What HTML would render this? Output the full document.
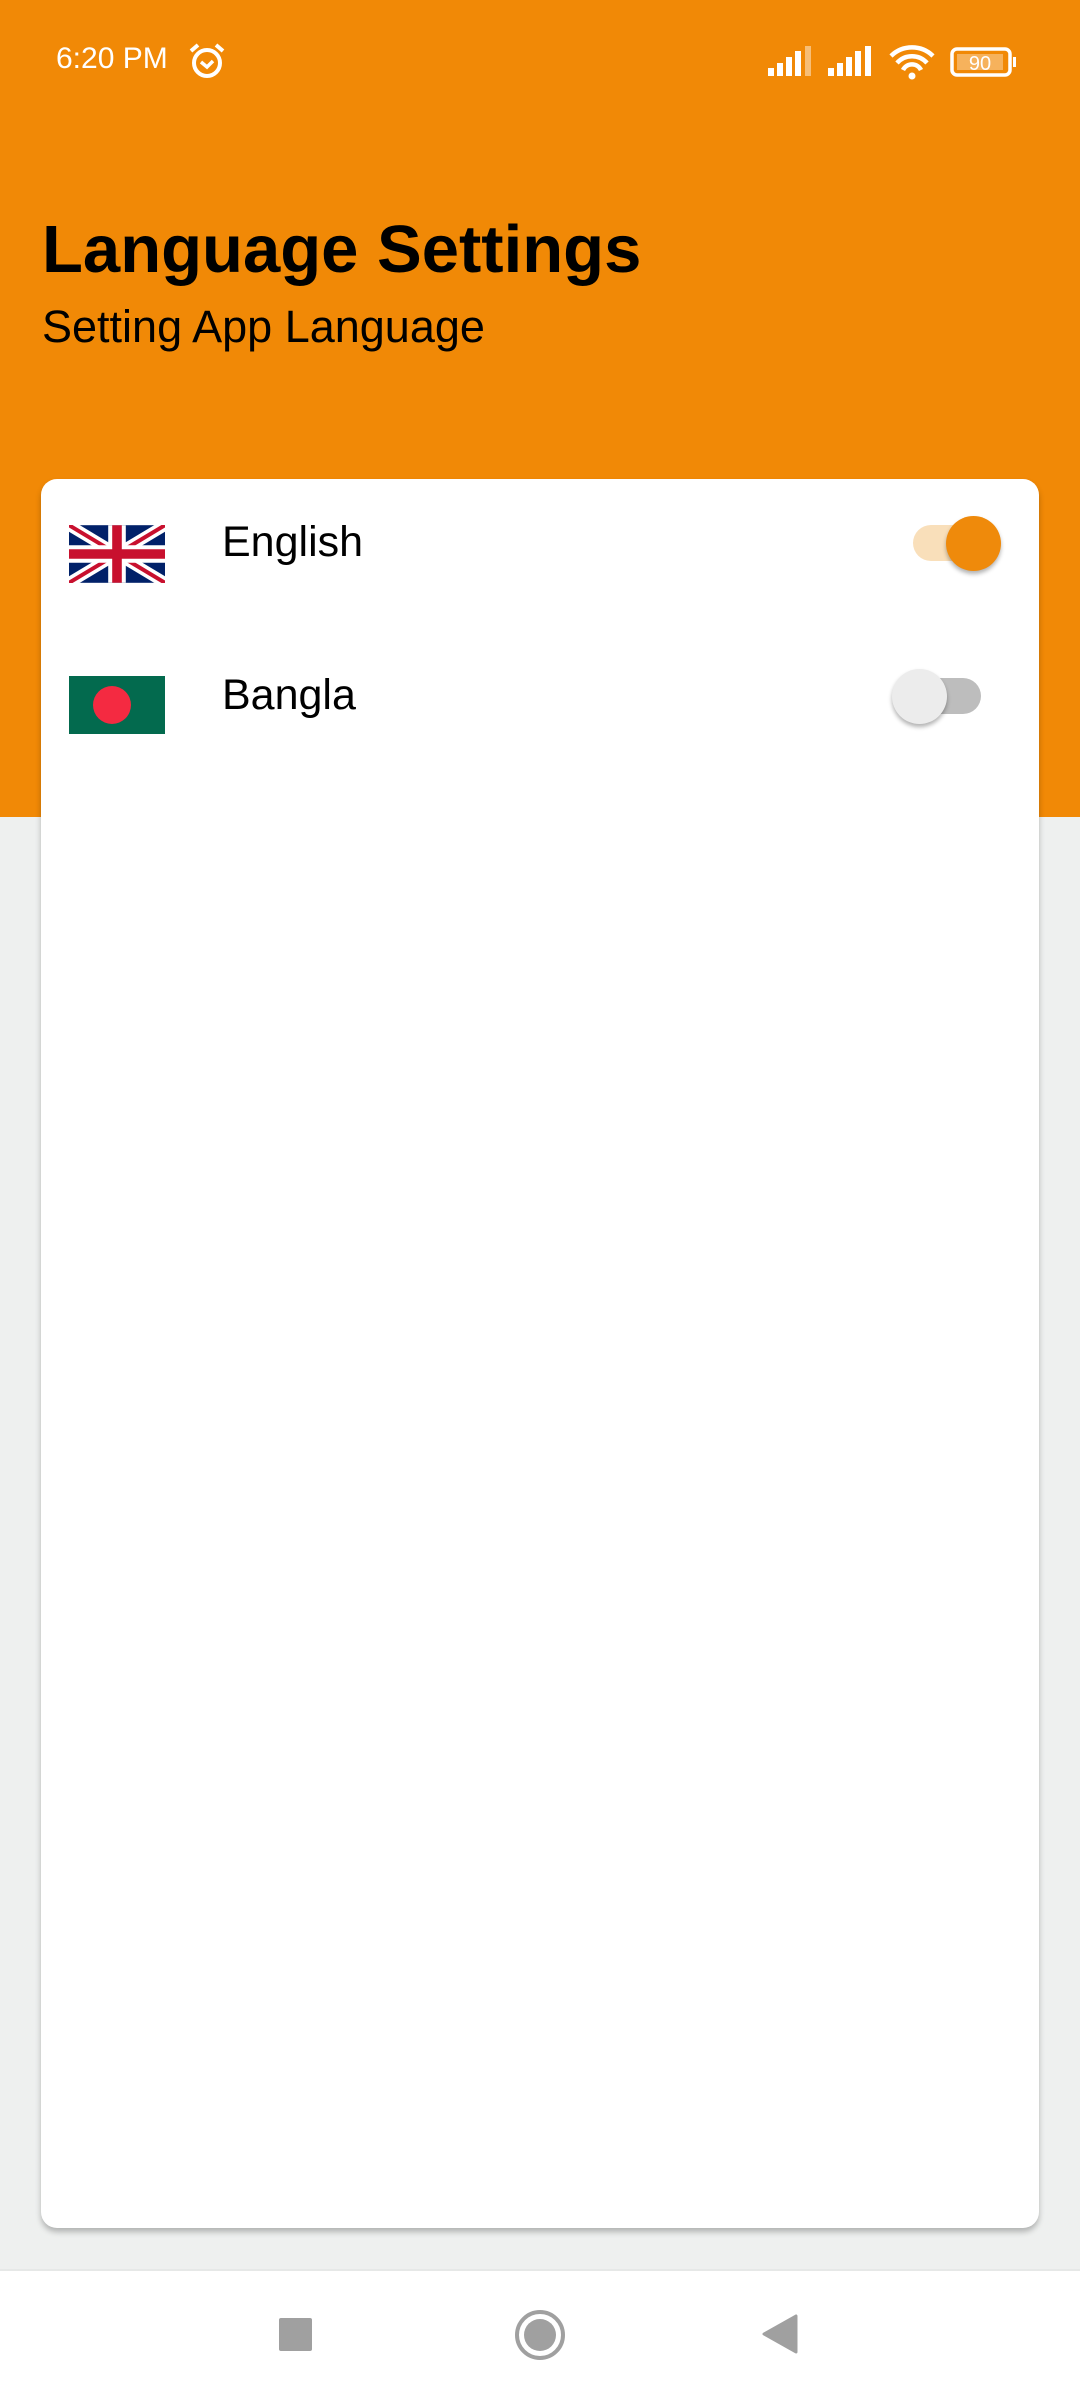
<!DOCTYPE html>
<html><head><meta charset="utf-8"><style>
*{margin:0;padding:0;box-sizing:border-box}
body{width:1080px;height:2400px;position:relative;background:#EEF0EF;font-family:"Liberation Sans",sans-serif;overflow:hidden}
.hdr{position:absolute;left:0;top:0;width:1080px;height:817px;background:#F18906}
.st{position:absolute;color:#fff;font-size:30px;top:42px;left:56px}
.t1{position:absolute;left:42px;top:211px;font-size:67px;font-weight:bold;color:#000}
.t2{position:absolute;left:42px;top:301px;font-size:45px;color:#000}
.card{position:absolute;left:41px;top:479px;width:998px;height:1749px;background:#fff;border-radius:16px;box-shadow:0 4px 6px rgba(0,0,0,.25)}
.lbl{position:absolute;left:222px;font-size:43px;color:#000}
.nav{position:absolute;left:0;top:2269px;width:1080px;height:131px;background:#fff;border-top:2px solid #e6e8e7}
</style></head><body>
<div class="hdr"></div>
<div class="st">6:20 PM</div>
<svg style="position:absolute;left:188px;top:42px" width="38" height="38" viewBox="0 0 38 38"><circle cx="19" cy="21" r="13" fill="none" stroke="#fff" stroke-width="4"/><path d="M13 20l6 5 6-6" fill="none" stroke="#fff" stroke-width="3.5"/><path d="M3 9l7-6M35 9l-7-6" stroke="#fff" stroke-width="4"/></svg>
<svg style="position:absolute;left:766px;top:44px" width="260" height="36" viewBox="0 0 260 36">
<g fill="#fff"><rect x="2" y="24" width="6" height="8"/><rect x="11" y="19" width="6" height="13"/><rect x="20" y="13" width="6" height="19"/><rect x="29" y="7" width="6" height="25"/><rect x="39" y="2" width="6" height="30" opacity=".45"/>
<rect x="62" y="24" width="6" height="8"/><rect x="71" y="19" width="6" height="13"/><rect x="80" y="13" width="6" height="19"/><rect x="89" y="7" width="6" height="25"/><rect x="99" y="2" width="6" height="30"/></g>
<path d="M125 12a30 30 0 0 1 42 0M131 19a20 20 0 0 1 30 0M137 26a10 10 0 0 1 18 0" fill="none" stroke="#fff" stroke-width="4.5"/><circle cx="146" cy="32" r="3.5" fill="#fff"/>
<rect x="186" y="5" width="58" height="26" rx="5" fill="none" stroke="#fff" stroke-width="3.5"/><rect x="191" y="10" width="46" height="16" fill="#fff" opacity=".35"/><rect x="247" y="13" width="3" height="10" fill="#fff"/>
<text x="214" y="26" font-size="20" fill="#fff" text-anchor="middle" font-family="Liberation Sans">90</text></svg>
<div class="t1">Language Settings</div>
<div class="t2">Setting App Language</div>
<div class="card"></div>
<svg style="position:absolute;left:69px;top:525px" width="96" height="58" viewBox="0 0 60 36"><rect width="60" height="36" fill="#012169"/><path d="M0 0L60 36M60 0L0 36" stroke="#fff" stroke-width="7"/><path d="M0 0L60 36M60 0L0 36" stroke="#C8102E" stroke-width="2.5"/><path d="M30 0v36M0 18h60" stroke="#fff" stroke-width="11"/><path d="M30 0v36M0 18h60" stroke="#C8102E" stroke-width="6"/></svg>
<div class="lbl" style="top:518px">English</div>
<div style="position:absolute;left:913px;top:525px;width:70px;height:36px;border-radius:18px;background:#F9DFBA"></div>
<div style="position:absolute;left:946px;top:516px;width:55px;height:55px;border-radius:50%;background:#EF8A0B;box-shadow:0 3px 4px rgba(0,0,0,.3)"></div>
<svg style="position:absolute;left:69px;top:676px" width="96" height="58"><rect width="96" height="58" fill="#036A4E"/><circle cx="43" cy="29" r="19" fill="#F42A41"/></svg>
<div class="lbl" style="top:671px">Bangla</div>
<div style="position:absolute;left:905px;top:678px;width:76px;height:36px;border-radius:18px;background:#BDBDBD"></div>
<div style="position:absolute;left:892px;top:669px;width:55px;height:55px;border-radius:50%;background:#ECECEC;box-shadow:0 3px 4px rgba(0,0,0,.3)"></div>
<div class="nav"></div>
<div style="position:absolute;left:279px;top:2318px;width:33px;height:33px;background:#A0A0A0;border-radius:2px"></div>
<div style="position:absolute;left:515px;top:2310px;width:50px;height:50px;border-radius:50%;border:4px solid #A0A0A0;background:#fff"></div>
<div style="position:absolute;left:524px;top:2319px;width:32px;height:32px;border-radius:50%;background:#A0A0A0"></div>
<svg style="position:absolute;left:762px;top:2314px" width="36" height="40"><path d="M34 2v36L2 20z" fill="#A0A0A0" stroke="#A0A0A0" stroke-linejoin="round" stroke-width="3"/></svg>
</body></html>
